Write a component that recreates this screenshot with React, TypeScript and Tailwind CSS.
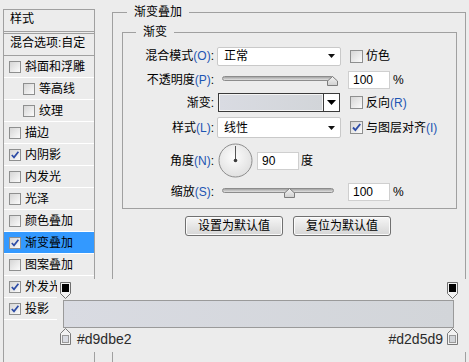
import React from "react";

function Check({ checked, size = 12, className = "" }: { checked?: boolean; size?: number; className?: string }) {
  return (
    <span
      className={
        "relative inline-block shrink-0 border border-[#8e8f8f] bg-gradient-to-br from-[#d6d6d6] to-[#fbfbfb] " +
        (size === 13 ? "w-[13px] h-[13px] " : "w-[12px] h-[12px] ") +
        className
      }
    >
      {checked && (
        <svg className="absolute left-0 top-0" width={size - 2} height={size - 2} viewBox="0 0 10 10">
          <path d="M1.8 5 L4 7.4 L8.4 1.8" fill="none" stroke="#2d4ca6" strokeWidth="1.7" />
        </svg>
      )}
    </span>
  );
}

function Label({ t, k }: { t: string; k?: string }) {
  return (
    <div className="w-[91px] shrink-0 text-right whitespace-nowrap leading-[16px]">
      {t}
      {k && <span className="text-[#1d55b3]">({k})</span>}:
    </div>
  );
}

function Arrow() {
  return (
    <svg width="7" height="4" viewBox="0 0 7 4">
      <path d="M0 0 H7 L3.5 4 Z" fill="#111" />
    </svg>
  );
}

function Thumb() {
  return (
    <svg width="11" height="10" viewBox="0 0 11 10">
      <defs>
        <linearGradient id="tg" x1="0" y1="0" x2="0" y2="1">
          <stop offset="0" stopColor="#f4f4f4" />
          <stop offset="1" stopColor="#d0d0d0" />
        </linearGradient>
      </defs>
      <path d="M5.5 0.5 L10.5 5 V9.5 H0.5 V5 Z" fill="url(#tg)" stroke="#7d7d7d" />
    </svg>
  );
}

function Slider({ pos }: { pos: number }) {
  return (
    <div className="relative ml-[3px] w-[124px] h-[20px] shrink-0">
      <div className="absolute left-[5px] top-[6px] w-[112px] h-[5px] rounded-full border border-[#8c8c8c] bg-gradient-to-b from-[#a4a4a4] to-[#e2e2e2]" />
      <div className="absolute top-[6px]" style={{ left: pos }}>
        <Thumb />
      </div>
    </div>
  );
}

function NumInput({ v, className = "" }: { v: string; className?: string }) {
  return (
    <div
      className={
        "w-[42px] h-[18px] shrink-0 bg-white border border-[#cfcfcf] pl-[4px] leading-[16px] text-[12px] " + className
      }
    >
      {v}
    </div>
  );
}

function Select({ text, h }: { text: string; h: "19" | "21" }) {
  return (
    <div
      className={
        "ml-[3px] w-[124px] shrink-0 bg-white border border-[#c9c9c9] rounded-[2px] flex items-center justify-between pl-[6px] pr-[5px] " +
        (h === "19" ? "h-[19px]" : "h-[21px]")
      }
    >
      <span className="leading-[16px]">{text}</span>
      <Arrow />
    </div>
  );
}

function TopStop() {
  return (
    <svg width="11" height="17" viewBox="0 0 11 17">
      <path d="M0.5 0.5 H10.5 V11.5 L5.5 16.5 L0.5 11.5 Z" fill="#f2f2f2" stroke="#6e6e6e" />
      <rect x="2" y="2" width="7" height="8" fill="#000" />
    </svg>
  );
}

function BottomStop({ color }: { color: string }) {
  return (
    <svg width="11" height="17" viewBox="0 0 11 17">
      <path d="M5.5 0.5 L10.5 5.5 V16.5 H0.5 V5.5 Z" fill="#f2f2f2" stroke="#7a7a7a" />
      <rect x="2.5" y="7.5" width="6" height="7" fill={color} stroke="#9a9a9a" />
    </svg>
  );
}

const items: { t: string; c: boolean; indent?: boolean; sel?: boolean }[] = [
  { t: "斜面和浮雕", c: false },
  { t: "等高线", c: false, indent: true },
  { t: "纹理", c: false, indent: true },
  { t: "描边", c: false },
  { t: "内阴影", c: true },
  { t: "内发光", c: false },
  { t: "光泽", c: false },
  { t: "颜色叠加", c: false },
  { t: "渐变叠加", c: true, sel: true },
  { t: "图案叠加", c: false },
  { t: "外发光", c: true },
  { t: "投影", c: true },
];

function LeftPanel() {
  return (
    <div className="mt-[9px] ml-[3px] w-[92px] h-[353px] shrink-0 border-x border-t border-[#a0a0a0] flex flex-col">
      <div className="h-[22px] border-b border-[#a0a0a0] pl-[6px] pt-[1px] leading-[16px]">样式</div>
      <div className="mt-[1px] h-[23px] border-y border-[#a0a0a0] pl-[6px] pt-[1px] leading-[16px] whitespace-nowrap overflow-hidden">
        混合选项:自定
      </div>
      {items.map((it) => (
        <div
          key={it.t}
          className={
            "h-[22px] shrink-0 border-b border-white flex items-center whitespace-nowrap " +
            (it.indent ? "pl-[19px] " : "pl-[5px] ") +
            (it.sel ? "bg-[#3399ff]" : "")
          }
        >
          <Check checked={it.c} />
          <span className="ml-[4px] leading-[16px]">{it.t}</span>
        </div>
      ))}
    </div>
  );
}

function Main() {
  return (
    <fieldset className="ml-[17px] mt-[3px] w-[354px] h-[420px] shrink-0 border border-[#a0a0a0] min-w-0">
      <legend className="ml-[14px] px-[7px] leading-[18px]">渐变叠加</legend>
      <fieldset className="ml-[9px] mt-[2px] w-[335px] h-[186px] border border-[#a0a0a0] min-w-0">
        <legend className="ml-[13px] px-[7px] leading-[18px]">渐变</legend>
        <div className="flex flex-col">
          <div className="flex items-center h-[20px] mt-[5px]">
            <Label t="混合模式" k="O" />
            <Select text="正常" h="19" />
            <Check size={13} className="ml-[9px]" />
            <span className="ml-[3px] leading-[16px]">仿色</span>
          </div>
          <div className="flex items-center h-[20px] mt-[4px]">
            <Label t="不透明度" k="P" />
            <Slider pos={110} />
            <NumInput v="100" className="ml-[7px]" />
            <span className="ml-[3px] leading-[16px]">%</span>
          </div>
          <div className="flex items-center h-[19px] mt-[3px]">
            <Label t="渐变" />
            <div className="ml-[4px] w-[122px] h-[19px] shrink-0 border border-[#3a3a3a] flex">
              <div className="flex-1 border border-[#f4f4f4] bg-gradient-to-r from-[#d9dbe2] to-[#d2d5d9]" />
              <div className="w-[16px] border-l border-[#3a3a3a] bg-white flex items-center justify-center">
                <svg width="9" height="5" viewBox="0 0 9 5">
                  <path d="M0 0 H9 L4.5 5 Z" fill="#000" />
                </svg>
              </div>
            </div>
            <Check size={13} className="ml-[10px]" />
            <span className="ml-[3px] leading-[16px]">
              反向<span className="text-[#1d55b3]">(R)</span>
            </span>
          </div>
          <div className="flex items-center h-[21px] mt-[5px]">
            <Label t="样式" k="L" />
            <Select text="线性" h="21" />
            <Check size={13} checked className="ml-[9px]" />
            <span className="ml-[3px] leading-[16px]">
              与图层对齐<span className="text-[#1d55b3]">(I)</span>
            </span>
          </div>
          <div className="flex items-center h-[35px] mt-[5px]">
            <Label t="角度" k="N" />
            <svg className="ml-[4px] shrink-0" width="35" height="35" viewBox="0 0 35 35">
              <defs>
                <radialGradient id="dg" cx="45%" cy="40%" r="65%">
                  <stop offset="0" stopColor="#fdfdfd" />
                  <stop offset="1" stopColor="#dedede" />
                </radialGradient>
              </defs>
              <circle cx="17.5" cy="17.5" r="16.5" fill="url(#dg)" stroke="#8d8d8d" />
              <line x1="17.5" y1="17.5" x2="17.5" y2="3" stroke="#555" strokeWidth="1" />
              <circle cx="17.5" cy="17.5" r="1.8" fill="#3a3a3a" />
            </svg>
            <NumInput v="90" className="ml-[4px]" />
            <span className="ml-[2px] leading-[16px]">度</span>
          </div>
          <div className="flex items-center h-[20px] mt-[4px]">
            <Label t="缩放" k="S" />
            <Slider pos={67} />
            <NumInput v="100" className="ml-[7px]" />
            <span className="ml-[3px] leading-[16px]">%</span>
          </div>
        </div>
      </fieldset>
      <div className="flex gap-[10px] ml-[72px] mt-[7px]">
        {["设置为默认值", "复位为默认值"].map((b) => (
          <div
            key={b}
            className="w-[98px] h-[20px] rounded-[3px] border border-[#707070] bg-gradient-to-b from-[#f6f6f6] to-[#d6d6d6] flex items-center justify-center leading-[16px] shadow-[inset_0_0_0_1px_#fbfbfb]"
          >
            {b}
          </div>
        ))}
      </div>
    </fieldset>
  );
}

function GradientStrip() {
  return (
    <div className="absolute left-[57px] top-[279px] w-[412px] h-[73px] bg-[#ececec] flex flex-col">
      <div className="h-[21px] shrink-0 flex justify-between items-start pt-[3px] pl-[3px] pr-[11px]">
        <TopStop />
        <TopStop />
      </div>
      <div className="ml-[6px] w-[391px] h-[28px] shrink-0 border border-[#9a9a9a] bg-gradient-to-r from-[#d9dbe2] to-[#d2d5d9]" />
      <div className="flex-1 flex justify-between items-start pl-[3px] pr-[11px] font-['Liberation_Sans',sans-serif] text-[14px] text-[#2b2b2b]">
        <div className="flex items-start">
          <BottomStop color="#d9dbe2" />
          <span className="ml-[6px] mt-[3px] leading-[16px]">#d9dbe2</span>
        </div>
        <div className="flex items-start">
          <span className="mr-[4px] mt-[3px] leading-[16px]">#d2d5d9</span>
          <BottomStop color="#d2d5d9" />
        </div>
      </div>
    </div>
  );
}

export default function App() {
  return (
    <div className="relative w-[469px] h-[362px] overflow-hidden bg-[#ececec] text-[12px] text-black font-['Liberation_Sans','Noto_Sans_CJK_SC',sans-serif] flex items-start">
      <LeftPanel />
      <Main />
      <GradientStrip />
    </div>
  );
}
